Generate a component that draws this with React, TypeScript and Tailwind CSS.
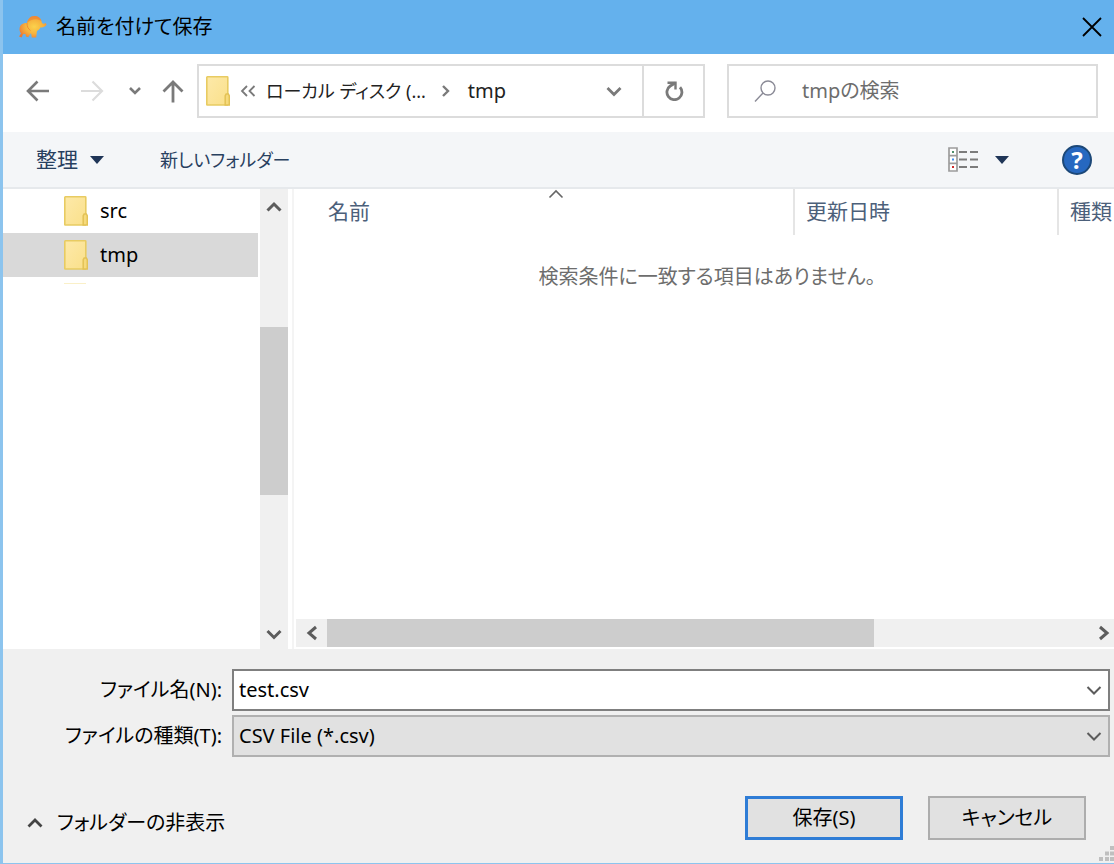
import React from 'react';

type IconProps = { className?: string };

const FolderIcon = ({ className = '' }: IconProps) => (
    <svg viewBox="0 0 24 30" className={`w-6 h-[30px] shrink-0 ${className}`} aria-hidden="true">
        <defs>
            <linearGradient id="folder" x1="0" y1="0" x2="1" y2="1">
                <stop offset="0" stopColor="#fde9a9" />
                <stop offset="1" stopColor="#fae08a" />
            </linearGradient>
        </defs>
        <rect x="0.8" y="0.8" width="21" height="28.2" rx="0.6" fill="url(#folder)" stroke="#e8cb62" strokeWidth="1.6" />
        <path d="M19.2 29V19.8l1-1.8h2.2l.9 1.8V29z" fill="#f6da7c" stroke="#e3c255" strokeWidth="1.5" />
    </svg>
);

const AppIcon = () => (
    <svg viewBox="0 0 30 24" className="w-[30px] h-6 shrink-0" aria-hidden="true">
        <defs>
            <radialGradient id="app" cx="0.55" cy="0.5" r="0.6">
                <stop offset="0" stopColor="#fbd24c" />
                <stop offset="0.55" stopColor="#f6b23d" />
                <stop offset="1" stopColor="#ee7a32" />
            </radialGradient>
        </defs>
        <path
            d="M1 21.500 3 18.500C1.200 16.500 1 13 2.500 10.500 4 8.300 6.500 7.600 9 8c.8-4.200 3.600-7 7.500-7 3.800 0 6.500 2.300 7.300 6.200.8 1.800 2.200 2 3.800.8l1 1.600c-1.200 2.400-3.400 3.200-6 2.600-.8 1.800-2 3-3.600 3.800l-.8 6.500h-4.400l-.8-4.500-2.800 4.300-2.200-.8-.6-2.500-2.400.2-1.200 3.300z"
            fill="url(#app)"
        />
        <path d="M9 8c.8-4.200 3.600-7 7.500-7 3.400 0 5.900 1.800 7 5-4.500-2.800-10-2.500-14.500 2z" fill="#ed8236" opacity="0.65" />
        <path d="M9 8c0 3.400 1 5.800 3.500 7.500" fill="none" stroke="#ec7d2c" strokeWidth="1" opacity="0.7" />
    </svg>
);

const Chevron = ({ d, className = '' }: IconProps & { d: string }) => (
    <svg viewBox="0 0 16 16" className={`w-4 h-4 shrink-0 ${className}`} fill="none" stroke="currentColor" aria-hidden="true">
        <path d={d} />
    </svg>
);

const UP = 'M1.500 11.500 8 5l6.500 6.500';
const DOWN = 'M1.500 5 8 11.500 14.500 5';
const LEFT = 'M12 2 5 8l7 6';
const RIGHT = 'M4 2l7 6-7 6';

const Caret = () => (
    <svg viewBox="0 0 14 8" className="w-3.5 h-2" aria-hidden="true">
        <path d="M0 0h14L7 8z" fill="#1f3557" />
    </svg>
);

const TitleBar = () => (
    <header className="flex items-center h-[54px] pl-[15px] pr-3 bg-[#64b1ed]">
        <AppIcon />
        <h1 className="ml-2 flex-1 text-xl text-black">名前を付けて保存</h1>
        <button type="button" aria-label="閉じる">
            <svg viewBox="0 0 20 20" className="w-5 h-5" stroke="#000" strokeWidth="1.8" aria-hidden="true">
                <path d="M1 1l18 18M19 1L1 19" />
            </svg>
        </button>
    </header>
);

const AddressRow = () => (
    <nav className="flex items-center h-[78px] pl-[23px] pr-4 pb-1 text-[#7a7a7a]">
        <button type="button" aria-label="戻る">
            <svg viewBox="0 0 24 24" className="w-6 h-6" fill="none" stroke="currentColor" strokeWidth="2.6" aria-hidden="true">
                <path d="M23 12H2M11.500 2.500 2 12l9.500 9.500" />
            </svg>
        </button>
        <button type="button" aria-label="進む" className="ml-[30px] text-[#dcdcdc]">
            <svg viewBox="0 0 24 24" className="w-6 h-6" fill="none" stroke="currentColor" strokeWidth="2.200" aria-hidden="true">
                <path d="M1 12h21M12.500 2.500 22 12l-9.500 9.500" />
            </svg>
        </button>
        <button type="button" aria-label="最近表示した場所" className="ml-6">
            <svg viewBox="0 0 14 14" className="w-3.5 h-3.5" fill="none" stroke="currentColor" strokeWidth="2.600" aria-hidden="true">
                <path d="M2 4l5 5 5-5" />
            </svg>
        </button>
        <button type="button" aria-label="上へ" className="ml-5">
            <svg viewBox="0 0 22 24" className="w-[22px] h-6" fill="none" stroke="currentColor" strokeWidth="2.800" aria-hidden="true">
                <path d="M11 23.500V3M1.500 12.500 11 3l9.500 9.500" />
            </svg>
        </button>

        <div className="flex-1 ml-[13px] grid grid-cols-[508fr_371fr] gap-[22px]">
            {/* アドレスバー */}
            <div className="flex items-center h-[54px] min-w-0 border-2 border-[#dcdcdc] pl-[7px]">
                <FolderIcon />
                <svg viewBox="0 0 16 12" className="w-4 h-3 ml-2.5 shrink-0" fill="none" stroke="currentColor" strokeWidth="1.8" aria-hidden="true">
                    <path d="M7 1 2 6l5 5M14.500 1l-5 5 5 5" />
                </svg>
                <a href="#disk" className="ml-2.5 whitespace-nowrap text-lg text-[#222]">ローカル ディスク (...</a>
                <Chevron d={'M5 3l5 5-5 5'} className="ml-3 stroke-[2.4]" />
                <a href="#tmp" className="ml-3.5 text-xl text-[#222]">tmp</a>
                <button type="button" aria-label="以前の場所" className="ml-auto mr-5">
                    <Chevron d={DOWN} className="stroke-[2.8]" />
                </button>
                <button type="button" aria-label="最新の情報に更新" className="flex items-center justify-center w-[61px] h-full border-l-2 border-[#dcdcdc]">
                    <svg viewBox="0 0 20 20" className="w-5 h-5" fill="none" stroke="currentColor" strokeWidth="2.800" aria-hidden="true">
                        <path d="M16 6.200A7.500 7.500 0 1 1 6.200 5L11.200 2" />
                        <path d="M3.500 1.700h8v6.800" strokeWidth="2.400" />
                    </svg>
                </button>
            </div>

            <label className="flex items-center h-[54px] min-w-0 border-2 border-[#dcdcdc] pl-[25px]">
                <svg viewBox="0 0 22 22" className="w-[22px] h-[22px] shrink-0" fill="none" stroke="#8a8a96" strokeWidth="1.4" aria-hidden="true">
                    <circle cx="14" cy="8" r="7" />
                    <path d="M9 13l-8 8.500" />
                </svg>
                <input
                    type="search"
                    aria-label="tmpの検索"
                    placeholder="tmpの検索"
                    className="ml-[26px] min-w-0 flex-1 text-xl outline-none placeholder:text-[#6d6d6d]"
                />
            </label>
        </div>
    </nav>
);

const ToolBar = () => (
    <div className="flex items-center h-[57px] pl-[33px] pr-[22px] bg-[#f4f6f8] border-b-2 border-[#e6e9ec] text-[21px] text-[#28405f]">
        <button type="button" className="flex items-center gap-3">
            整理
            <Caret />
        </button>
        <button type="button" className="ml-14 text-lg">新しいフォルダー</button>
        <button type="button" aria-label="表示方法" className="ml-auto flex items-center gap-[17px]">
            <svg viewBox="0 0 30 25" className="w-[30px] h-[25px]" aria-hidden="true">
                <path d="M1 1h8v23H1zM1 8.700h8M1 16.300h8" fill="#fff" stroke="#9c9c9c" strokeWidth="1.700" />
                <rect x="4" y="4" width="2" height="2" fill="#4d8f6b" />
                <rect x="4" y="11.500" width="2" height="2" fill="#3f8ef0" />
                <rect x="4" y="19" width="2" height="2" fill="#cf2a2a" />
                <path d="M11 5h8M22 5h8M11 12.500h8M22 12.500h8M11 20h8M22 20h8" stroke="#7c7c7c" strokeWidth="1.800" />
            </svg>
            <Caret />
        </button>
        <button
            type="button"
            aria-label="ヘルプ"
            className="ml-[53px] flex items-center justify-center w-[30px] h-[30px] rounded-full border-2 border-[#1c4878] bg-[#2668c0] text-2xl font-bold text-white"
        >
            ?
        </button>
    </div>
);

const Sidebar = () => (
    <aside className="flex w-[291px] shrink-0 border-r-2 border-[#f4f4f4]">
        <ul className="flex-1 pr-0.5 text-xl text-black">
            <li>
                <a href="#src" className="flex items-center gap-3 h-11 pl-[61px]">
                    <FolderIcon />
                    src
                </a>
            </li>
            <li>
                <a href="#tmp" aria-current="true" className="flex items-center gap-3 h-11 pl-[61px] bg-[#d9d9d9]">
                    <FolderIcon />
                    tmp
                </a>
            </li>
            <li className="mt-1.5 ml-[61px] w-[22px] h-px bg-[#faf0c8]" />
        </ul>
        <div className="flex flex-col items-center w-7 mr-1 bg-[#f0f0f0] text-[#5c5c5c]">
            <button type="button" aria-label="上へスクロール" className="h-9">
                <Chevron d={UP} className="stroke-[3]" />
            </button>
            <div className="flex-1 w-full grid grid-rows-[102fr_169fr_123fr]">
                <div className="row-start-2 bg-[#cdcdcd]" />
            </div>
            <button type="button" aria-label="下へスクロール" className="h-[31px]">
                <Chevron d={DOWN} className="stroke-[3]" />
            </button>
        </div>
    </aside>
);

const FileList = () => (
    <main className="flex flex-col flex-1 min-w-0">
        <table className="w-full table-fixed text-[21px]">
            <thead className="text-left text-[#4c607a]">
                <tr className="h-[46px]">
                    <th className="relative pl-[34px] font-normal">
                        名前
                        <span className="absolute inset-x-0 top-0 flex justify-center pl-6">
                            <svg viewBox="0 0 16 10" className="w-4 h-2.5" fill="none" stroke="#666" strokeWidth="1.600" aria-hidden="true">
                                <path d="M1.500 8.500 8 2l6.500 6.500" />
                            </svg>
                        </span>
                    </th>
                    <th className="w-[264px] border-l-2 border-[#e5e5e5] pl-[11px] font-normal">更新日時</th>
                    <th className="w-14 overflow-hidden whitespace-nowrap border-l-2 border-[#e5e5e5] pl-[11px] font-normal">種類</th>
                </tr>
            </thead>
            <tbody>
                <tr>
                    <td colSpan={3} className="pt-7 pl-1.5 text-center text-xl text-[#6d6d6d]">
                        検索条件に一致する項目はありません。
                    </td>
                </tr>
            </tbody>
        </table>
        <div className="mt-auto mb-0.5 ml-0.5 flex items-center h-7 bg-[#f0f0f0] text-[#5c5c5c]">
            <button type="button" aria-label="左へスクロール" className="flex justify-center w-[31px]">
                <Chevron d={LEFT} className="stroke-[3]" />
            </button>
            <div className="flex-1 h-full grid grid-cols-[547fr_220fr]">
                <div className="bg-[#cdcdcd]" />
            </div>
            <button type="button" aria-label="右へスクロール" className="flex justify-end w-5 pr-0.5">
                <Chevron d={RIGHT} className="stroke-[3]" />
            </button>
        </div>
    </main>
);

const Footer = () => (
    <footer className="relative pt-5 pb-[23px] bg-[#f0f0f0] text-xl text-black">
        <div className="grid grid-cols-[219px_1fr] items-center gap-x-2.5 gap-y-1 pr-1">
            <label htmlFor="filename" className="text-right whitespace-nowrap">ファイル名(N):</label>
            <div className="flex h-[42px] border-2 border-[#7f7f7f] bg-white">
                <input id="filename" type="text" defaultValue="test.csv" className="min-w-0 flex-1 pl-[5px] outline-none" />
                <button type="button" aria-label="候補を表示" className="px-1.5 text-[#5c5c5c]">
                    <Chevron d={DOWN} className="stroke-2" />
                </button>
            </div>

            <label htmlFor="filetype" className="text-right whitespace-nowrap">ファイルの種類(T):</label>
            <div className="grid items-center h-[42px] border-2 border-[#b0b0b0] bg-[#e1e1e1]">
                <select id="filetype" className="col-start-1 row-start-1 w-full h-full pl-[5px] appearance-none outline-none">
                    <option>CSV File (*.csv)</option>
                </select>
                <Chevron d={DOWN} className="col-start-1 row-start-1 justify-self-end mr-1.5 stroke-2 text-[#5c5c5c] pointer-events-none" />
            </div>
        </div>

        <div className="mt-[39px] flex items-center pl-6 pr-7">
            <button type="button" className="mt-2.5 flex items-center gap-3.5">
                <Chevron d={UP} className="stroke-[2.8] text-[#444]" />
                フォルダーの非表示
            </button>
            <button type="button" className="ml-auto w-[158px] h-11 border-[3px] border-[#2f7dd6] bg-[#e1e1e1]">保存(S)</button>
            <button type="button" className="ml-[25px] w-[158px] h-11 border-2 border-[#adadad] bg-[#e1e1e1]">キャンセル</button>
        </div>

        <svg viewBox="0 0 15 15" className="absolute right-0 bottom-0.5 w-[15px] h-[15px]" fill="#bfbfbf" aria-hidden="true">
            <path d="M11 0h4v4h-4zM6 5.500h4v4H6zM11 5.500h4v4h-4zM0 11h4v4H0zM6 11h4v4H6zM11 11h4v4h-4z" />
        </svg>
    </footer>
);

const App = () => {
    return (
        <div className="flex flex-col min-h-screen bg-white border-l-3 border-b border-[#8cc4ee] font-['Noto_Sans','Noto_Sans_CJK_JP',sans-serif] [font-feature-settings:'palt']">
            <TitleBar />
            <AddressRow />
            <ToolBar />
            <div className="flex flex-1">
                <Sidebar />
                <FileList />
            </div>
            <Footer />
        </div>
    );
};

export default App;
